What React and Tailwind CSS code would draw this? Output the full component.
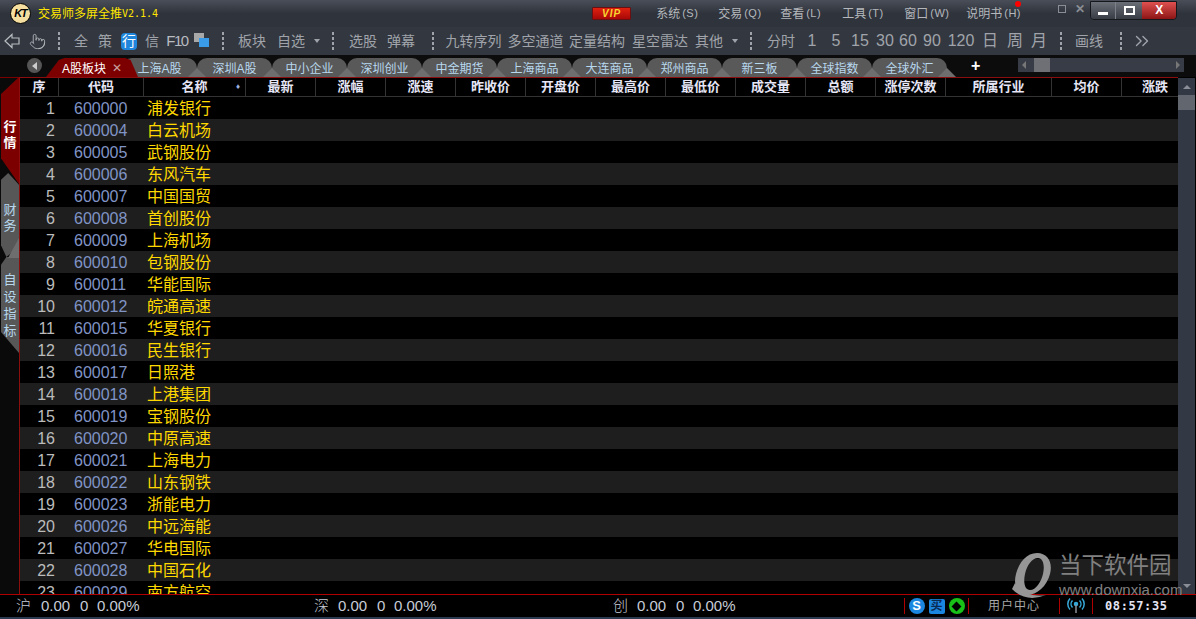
import { Pointer, ChevronsRight } from "lucide-react";

const MENUS = [
  { name: "系统", key: "(S)" },
  { name: "交易", key: "(Q)" },
  { name: "查看", key: "(L)" },
  { name: "工具", key: "(T)" },
  { name: "窗口", key: "(W)" },
  { name: "说明书", key: "(H)" },
];

// width of each slot in the toolbar, text is centered in it
const TOOLS = [
  { t: "全", w: "w-[24px]" },
  { t: "策", w: "w-[24px]" },
  { t: "行", w: "w-[24px]", on: true },
  { t: "信", w: "w-[22px]" },
  { t: "F10", w: "w-[28px]", narrow: true },
  { icon: true, w: "w-[20px]" },
  { sep: true, w: "w-[24px]" },
  { t: "板块", w: "w-[34px]" },
  { t: "自选", w: "w-[44px]" },
  { caret: true, w: "w-[8px]" },
  { sep: true, w: "w-[24px]" },
  { t: "选股", w: "w-[36px]" },
  { t: "弹幕", w: "w-[40px]" },
  { sep: true, w: "w-[24px]" },
  { t: "九转序列", w: "w-[57px]" },
  { t: "多空通道", w: "w-[67px]" },
  { t: "定量结构", w: "w-[56px]" },
  { t: "星空雷达", w: "w-[70px]" },
  { t: "其他", w: "w-[28px]" },
  { caret: true, w: "w-[24px]" },
  { sep: true, w: "w-[8px]" },
  { t: "分时", w: "w-[52px]" },
  { t: "1", w: "w-[10px]", num: true },
  { t: "5", w: "w-[38px]", num: true },
  { t: "15", w: "w-[10px]", num: true },
  { t: "30", w: "w-[40px]", num: true },
  { t: "60", w: "w-[6px]", num: true },
  { t: "90", w: "w-[42px]", num: true },
  { t: "120", w: "w-[16px]", num: true },
  { t: "日", w: "w-[42px]", big: true },
  { t: "周", w: "w-[8px]", big: true },
  { t: "月", w: "w-[40px]", big: true },
  { sep: true, w: "w-[4px]" },
  { t: "画线", w: "w-[52px]" },
  { sep: true, w: "w-[12px]" },
];

const TABS = ["上海A股", "深圳A股", "中小企业", "深圳创业", "中金期货", "上海商品", "大连商品", "郑州商品", "新三板", "全球指数", "全球外汇"];

const COLUMNS = [
  { t: "序", w: "w-[39px]" },
  { t: "代码", w: "w-[85px]" },
  { t: "名称", w: "w-[102px]", sort: true },
  { t: "最新", w: "w-[70px]" },
  { t: "涨幅", w: "w-[70px]" },
  { t: "涨速", w: "w-[70px]" },
  { t: "昨收价", w: "w-[70px]" },
  { t: "开盘价", w: "w-[70px]" },
  { t: "最高价", w: "w-[70px]" },
  { t: "最低价", w: "w-[70px]" },
  { t: "成交量", w: "w-[70px]" },
  { t: "总额", w: "w-[70px]" },
  { t: "涨停次数", w: "w-[70px]" },
  { t: "所属行业", w: "w-[106px]" },
  { t: "均价", w: "w-[70px]" },
  { t: "涨跌", w: "w-[56px]", last: true },
];

const STOCKS = [
  ["600000", "浦发银行"],
  ["600004", "白云机场"],
  ["600005", "武钢股份"],
  ["600006", "东风汽车"],
  ["600007", "中国国贸"],
  ["600008", "首创股份"],
  ["600009", "上海机场"],
  ["600010", "包钢股份"],
  ["600011", "华能国际"],
  ["600012", "皖通高速"],
  ["600015", "华夏银行"],
  ["600016", "民生银行"],
  ["600017", "日照港"],
  ["600018", "上港集团"],
  ["600019", "宝钢股份"],
  ["600020", "中原高速"],
  ["600021", "上海电力"],
  ["600022", "山东钢铁"],
  ["600023", "浙能电力"],
  ["600026", "中远海能"],
  ["600027", "华电国际"],
  ["600028", "中国石化"],
  ["600029", "南方航空"],
];

const Sep = () => (
  <div className="flex flex-col items-center gap-[2px]">
    <span className="w-[2px] h-[3px] bg-[#a0a4aa]" />
    <span className="w-[2px] h-[3px] bg-[#a0a4aa]" />
    <span className="w-[2px] h-[3px] bg-[#a0a4aa]" />
    <span className="w-[2px] h-[3px] bg-[#a0a4aa]" />
  </div>
);

const Caret = () => <span className="w-0 h-0 border-x-[3px] border-x-transparent border-t-[4px] border-t-[#a0a4aa]" />;

function ToolItem({ item }) {
  const box = `${item.w} shrink-0 flex items-center justify-center whitespace-nowrap`;
  if (item.sep) return <div className={box}><Sep /></div>;
  if (item.caret) return <div className={box}><Caret /></div>;
  if (item.icon) {
    return (
      <div className={box}>
        <div className="relative w-[15px] h-[14px] -mt-[2px]">
          <span className="absolute left-0 top-0 w-[10px] h-[9px] bg-[#a8a8a8]" />
          <span className="absolute right-0 bottom-0 w-[10px] h-[9px] bg-[#3a9be8]" />
        </div>
      </div>
    );
  }
  if (item.on) {
    return (
      <div className={box}>
        <span className="w-[16px] h-[17px] rounded-[4px] bg-[#1f86dc] text-white text-[14px] leading-[17px] text-center">{item.t}</span>
      </div>
    );
  }
  if (item.num) return <div className={`${box} text-[16px] font-light`}>{item.t}</div>;
  if (item.narrow) return <div className={`${box} text-[15px] tracking-[-1.5px] text-[#b8bcc0]`}>{item.t}</div>;
  if (item.big) return <div className={`${box} text-[16px]`}>{item.t}</div>;
  return <div className={`${box} text-[14px]`}>{item.t}</div>;
}

export default function App() {
  return (
    <div className="w-[1196px] h-[619px] overflow-hidden relative flex flex-col bg-black [font-family:'Liberation_Sans','Noto_Sans_CJK_SC',sans-serif]">
      {/* title bar */}
      <div className="h-[27px] shrink-0 flex items-center bg-gradient-to-b from-[#4a4e58] via-[#2f333c] to-[#2f333c] text-[#b4b8bc]">
        <div className="ml-[10px] w-[21px] h-[21px] rounded-full bg-[#f5dfa0] border border-black flex items-center justify-center text-black text-[11px] font-bold italic tracking-[-1px]">KT</div>
        <div className="ml-[7px] text-[#ffe600] text-[12px] whitespace-nowrap flex items-center">
          交易师多屏全推<span className="[font-family:'DejaVu_Sans_Mono',monospace] text-[10px]">V2.1.4</span>
        </div>
        <div className="ml-[434px] w-[39px] h-[13px] rounded-[1px] bg-gradient-to-b from-[#e02010] to-[#a80808] border border-[#6a1010] flex items-center justify-center text-[#f8d830] text-[10px] font-bold italic tracking-[1px] leading-none">VIP</div>
        <div className="ml-[25px] flex items-center gap-[20px] text-[12px] whitespace-nowrap">
          {MENUS.map((m) => (
            <div key={m.name} className="relative flex items-center">
              {m.name}
              <span className="[font-family:'Liberation_Sans',sans-serif] text-[11px] ml-[2px] w-[16px] tracking-[0.5px] whitespace-nowrap">{m.key}</span>
              {m.name === "说明书" && <span className="absolute -top-[4px] right-[-1px] w-[6px] h-[6px] rounded-full bg-[#ff0000]" />}
            </div>
          ))}
        </div>
        <div className="ml-[38px] w-[8px] h-[8px] border border-[#8a8e94] mb-[10px]" />
        <div className="ml-[9px] text-[#8a8e94] text-[12px] font-bold leading-none mb-[9px]">✕</div>
        <div className="ml-[5px] mb-[7px] w-[87px] h-[19px] flex rounded-b-[4px] overflow-hidden border border-[#15171b]">
          <div className="w-[25px] bg-gradient-to-b from-[#6b7078] to-[#383c44] flex items-end justify-center pb-[4px] border-r border-[#7c8088]">
            <span className="w-[10px] h-[3px] bg-white" />
          </div>
          <div className="w-[26px] bg-gradient-to-b from-[#6b7078] to-[#383c44] flex items-center justify-center">
            <span className="w-[11px] h-[9px] border-2 border-white" />
          </div>
          <div className="flex-1 bg-gradient-to-b from-[#e05050] to-[#8c1414] flex items-center justify-center text-white text-[12px] font-bold leading-none">X</div>
        </div>
      </div>

      {/* toolbar */}
      <div className="h-[28px] shrink-0 flex items-center bg-[#333740] text-[#a0a4aa] pl-[4px]">
        <div className="w-[21px] shrink-0">
          <svg width="16" height="16" viewBox="0 0 16 16" fill="none" stroke="#b8bcc0" strokeWidth="1.2">
            <path d="M1 8 L8 1.5 V5 H15 V11 H8 V14.5 Z" />
          </svg>
        </div>
        <div className="w-[24px] shrink-0 flex justify-center">
          <Pointer size={17} strokeWidth={1.2} color="#b8bcc0" />
        </div>
        <div className="w-[20px] shrink-0 flex justify-center"><Sep /></div>
        {TOOLS.map((item, i) => (
          <ToolItem key={i} item={item} />
        ))}
        <div className="w-[30px] shrink-0 flex justify-center">
          <ChevronsRight size={22} strokeWidth={1.5} color="#a0a4aa" />
        </div>
      </div>

      {/* tabs */}
      <div className="h-[22px] shrink-0 flex items-end bg-[#0c0c0c] relative">
        <div className="ml-[27px] mb-[4px] w-[15px] h-[15px] rounded-full bg-[#555] flex items-center justify-center">
          <span className="w-0 h-0 border-y-[4px] border-y-transparent border-r-[5px] border-r-[#ccc]" />
        </div>
        <div className="ml-[4px] w-[92px] h-[19px] relative bg-[#7d0000] text-white text-[12px] [clip-path:polygon(0_100%,14%_10%,20%_0,86%_0,92%_10%,100%_100%)] flex items-center pl-[16px] pt-[3px] whitespace-nowrap z-10">
          A股板块
          <span className="absolute left-[66px] top-[1px] text-[#c8a0a0] text-[12px]">✕</span>
        </div>
        <div className="-ml-[16px] flex items-end">
          {TABS.map((t) => (
            <div key={t} className="relative w-[75px] h-[19px] shrink-0 bg-[#595959] rounded-t-[10px] text-[#b8d8ee] text-[12px] pt-[3px] flex items-center justify-center whitespace-nowrap">
              {t}
              <span className="absolute -right-[9px] bottom-0 w-[18px] h-[9px] bg-[#6e6e6e] [clip-path:polygon(50%_0,100%_100%,0_100%)] z-[1]" />
            </div>
          ))}
        </div>
        <span className="ml-[24px] mb-[3px] text-white text-[16px] font-bold leading-none">+</span>
        <div className="ml-[38px] mb-[5px] w-[166px] h-[14px] bg-[#373c47] flex items-center justify-between px-[4px]">
          <span className="w-0 h-0 border-y-[4px] border-y-transparent border-r-[4px] border-r-[#777]" />
          <span className="absolute left-[1034px] bottom-[5px] w-[16px] h-[14px] bg-[#6e7076]" />
          <span className="w-0 h-0 border-y-[4px] border-y-transparent border-l-[4px] border-l-[#777]" />
        </div>
      </div>

      {/* main */}
      <div className="flex-1 min-h-0 flex">
        {/* side tabs */}
        <div className="w-[19px] shrink-0 flex flex-col bg-[#0a0a0a] border-t border-[#7d0000] pl-px relative">
          <div className="h-[107px] -mt-px shrink-0 bg-[#7d0000] [clip-path:polygon(100%_0,100%_100%,0_76%,0_16%)] flex flex-col items-center justify-center gap-[2px] text-white text-[13px] font-bold leading-[14px] pt-[8px]">
            <span>行</span>
            <span>情</span>
          </div>
          <div className="h-[84px] -mt-[11px] shrink-0 bg-[#575757] [clip-path:polygon(40%_0,100%_14%,100%_88%,30%_100%,0_86%,0_8%)] flex flex-col items-center justify-center gap-[2px] text-[#b8d8ee] text-[13px] leading-[14px] pt-[6px]">
            <span>财</span>
            <span>务</span>
          </div>
          <div className="h-[96px] shrink-0 bg-[#575757] [clip-path:polygon(30%_0,100%_0,100%_100%,0_78%,0_8%)] flex flex-col items-center justify-center gap-[3px] text-[#b8d8ee] text-[13px] leading-[14px]">
            <span>自</span>
            <span>设</span>
            <span>指</span>
            <span>标</span>
          </div>
          <span className="absolute right-0 top-[160px] w-[11px] h-[20px] bg-[#6e6e6e] [clip-path:polygon(100%_0,100%_100%,0_100%)]" />
        </div>

        {/* table */}
        <div className="flex-1 min-w-0 border-l border-t border-[#8c0d0d] overflow-hidden">
          <div className="h-[19px] flex border-b border-[#333] text-[#e6e6f6] text-[13px] font-bold bg-black">
            {COLUMNS.map((c) => (
              <div key={c.t} className={`${c.w} shrink-0 relative flex items-center justify-center whitespace-nowrap ${c.last ? "pl-[10px]" : "border-r border-[#333]"}`}>
                {c.t}
                {c.sort && <span className="absolute right-[5px] text-[#9ab0e0] text-[8px]">♦</span>}
              </div>
            ))}
          </div>
          {STOCKS.map((s, i) => (
            <div key={s[0]} className={`h-[22px] pt-[2px] flex items-center text-[16px] ${i % 2 === 1 ? "bg-[#1e1e1e]" : "bg-black"}`}>
              <div className="w-[35px] text-right text-[#bcbcbc] font-light">{i + 1}</div>
              <div className="ml-[19px] w-[73px] text-[#8094c6] font-light">{s[0]}</div>
              <div className="text-[#ffd800] whitespace-nowrap">{s[1]}</div>
            </div>
          ))}
        </div>

        {/* scrollbar */}
        <div className="w-[17px] shrink-0 mr-px mt-px flex flex-col bg-[#323844]">
          <div className="h-[17px] flex items-center justify-center">
            <span className="w-0 h-0 border-x-[4px] border-x-transparent border-b-[4px] border-b-[#8a8e96]" />
          </div>
          <div className="h-[15px] bg-[#62666e]" />
          <div className="flex-1" />
          <div className="h-[17px] flex items-center justify-center">
            <span className="w-0 h-0 border-x-[4px] border-x-transparent border-t-[4px] border-t-[#8a8e96]" />
          </div>
        </div>
      </div>

      {/* status bar */}
      <div className="h-[25px] shrink-0 border-t border-[#b00000] border-b-2 border-b-[#2b3a50] bg-black flex items-center text-[#c8ccd8] text-[15px] font-light whitespace-nowrap relative z-10">
        <div className="ml-[16px] w-[298px] flex items-center"><span className="w-[25px]">沪</span><span className="w-[39px]">0.00</span><span className="w-[17px]">0</span><span>0.00%</span></div>
        <div className="w-[299px] flex items-center"><span className="w-[24px]">深</span><span className="w-[39px]">0.00</span><span className="w-[17px]">0</span><span>0.00%</span></div>
        <div className="w-[291px] flex items-center"><span className="w-[24px]">创</span><span className="w-[39px]">0.00</span><span className="w-[17px]">0</span><span>0.00%</span></div>
        <div className="h-[16px] w-[65px] border-x border-[#b00000] flex items-center justify-center gap-[4px]">
          <span className="w-[16px] h-[16px] rounded-full bg-[#1b86e0] text-white text-[13px] font-bold leading-[16px] text-center">S</span>
          <span className="w-[16px] h-[15px] rounded-[2px] bg-[#1b86e0] text-[#0a2a50] text-[12px] font-bold leading-[15px] text-center">买</span>
          <span className="w-[16px] h-[16px] rounded-full bg-[#18c018] flex items-center justify-center">
            <span className="w-[7px] h-[7px] bg-black rotate-45" />
          </span>
        </div>
        <div className="w-[90px] text-center text-[12px] font-normal tracking-[1px] text-[#a8a8a8]">用户中心</div>
        <div className="h-[16px] w-[34px] border-x border-[#b00000] flex items-center justify-center">
          <svg width="18" height="16" viewBox="0 0 18 16" fill="none" stroke="#35a8d8" strokeWidth="1.5">
            <circle cx="9" cy="6" r="1.5" fill="#35a8d8" />
            <path d="M9 7 V15" stroke="#8a9098" />
            <path d="M5.5 2.5 A5 5 0 0 0 5.5 9.5 M12.5 2.5 A5 5 0 0 1 12.5 9.5 M3 0.5 A8 8 0 0 0 3 11.5 M15 0.5 A8 8 0 0 1 15 11.5" />
          </svg>
        </div>
        <div className="ml-[12px] [font-family:'DejaVu_Sans_Mono',monospace] text-[12px] font-bold tracking-[0.6px] text-[#e4e4f4]">08:57:35</div>
      </div>

      {/* watermark */}
      <div className="absolute left-[1010px] top-[553px] flex items-start pointer-events-none z-20">
        <svg width="46" height="50" viewBox="0 0 46 50">
          <path fillRule="evenodd" fill="#969696" d="M27 0 C38 0 43 10 40 21 C37 33 27 42 17 42 C7 42 3 32 6 21 C9 9 17 0 27 0 Z M28 5 C22 5 17 12 15 21 C13 30 15 37 20 37 C26 37 31 29 33 21 C35 12 33 5 28 5 Z" />
          <path d="M2 36 Q16 50 36 42 Q14 45 5 30 Z" fill="#969696" />
        </svg>
        <div className="ml-[3px] flex flex-col">
          <span className="text-[22.5px] leading-[26px] text-[#808080] whitespace-nowrap">当下软件园</span>
          <span className="text-[15px] leading-[18px] mt-[2px] text-[#808080] whitespace-nowrap">www.downxia.com</span>
        </div>
      </div>
    </div>
  );
}
